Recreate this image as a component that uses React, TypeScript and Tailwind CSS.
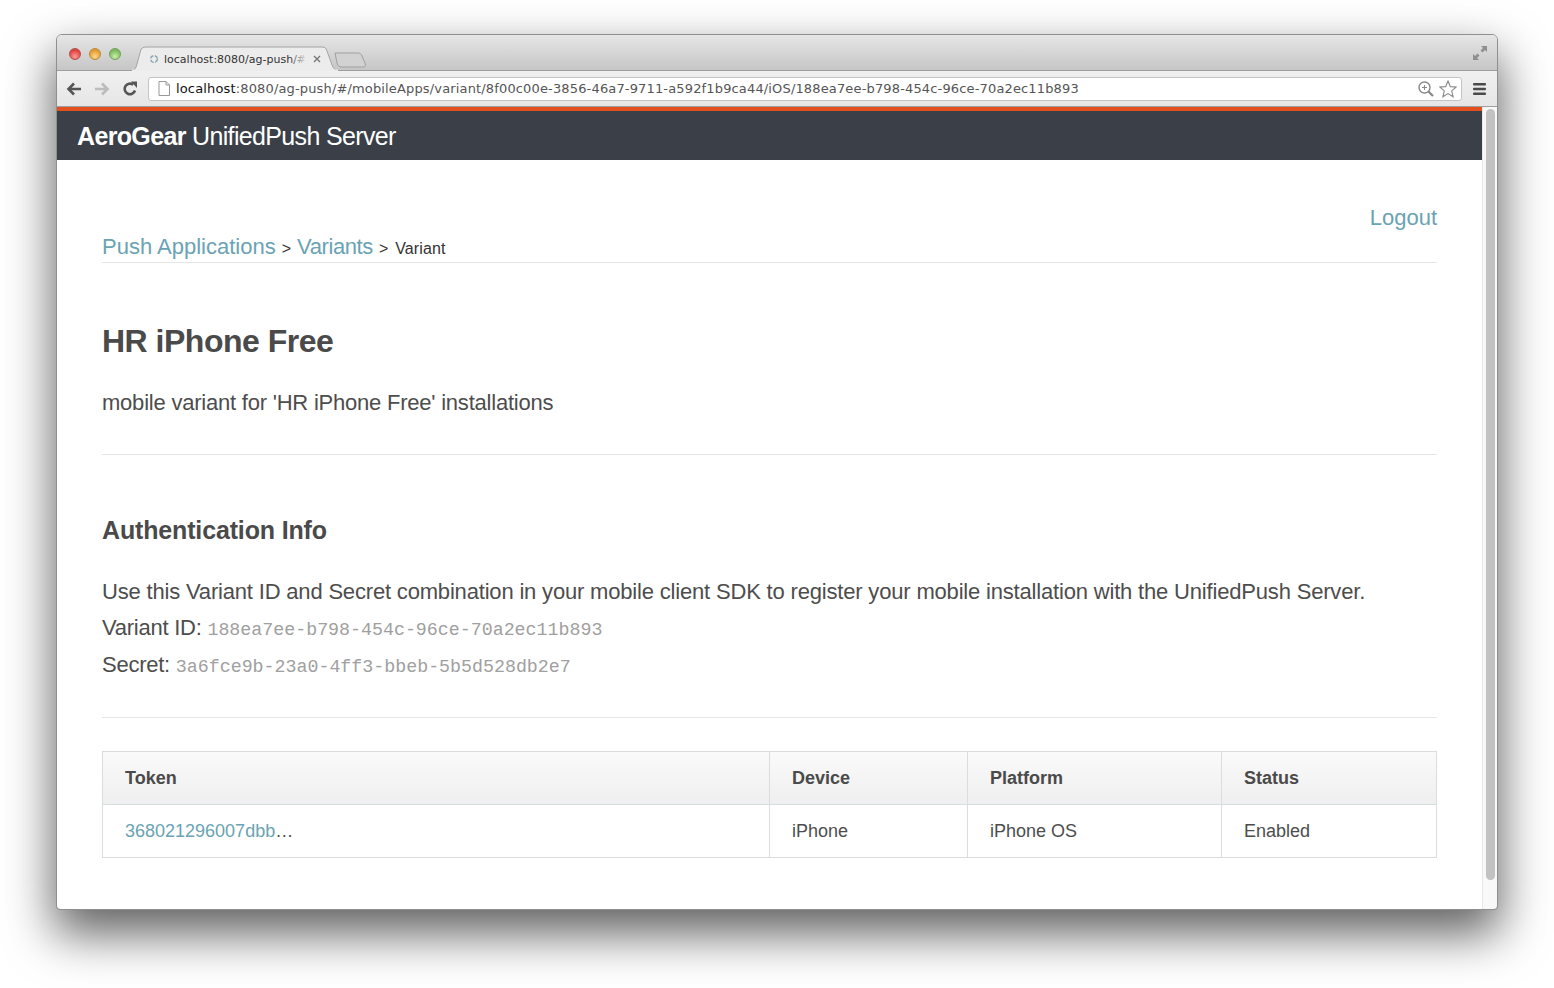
export default function App() {
  const sans = "font-['Liberation_Sans',Arial,sans-serif]";
  const mono = "font-['Liberation_Mono','Courier_New',monospace]";
  const tab = "font-['DejaVu_Sans','Noto_Sans',sans-serif]";
  const code = `text-[18.300px] leading-none tracking-normal text-[#a0a0a0] ${mono}`;
  const th = "h-[53px] px-[22px] flex items-center font-bold text-[#4a4a4a] bg-gradient-to-b from-[#fafafa] to-[#efefef] border-b border-[#d5dfe2]";
  return (
    <div className={`w-[1554px] h-[988px] bg-white overflow-hidden pt-[35px] pl-[57px] ${sans}`}>
      <div className="w-[1440px] h-[874px] rounded-t-[5px] rounded-b-[3px] flex flex-col overflow-hidden bg-white shadow-[0_22px_48px_3px_rgba(0,0,0,0.62)] outline outline-1 outline-[#8f8f8f]">
        {/* title bar */}
        <div className="h-[36px] shrink-0 relative bg-gradient-to-b from-[#e6e6e6] to-[#c6c6c6] border-b border-[#9e9e9e] flex items-start">
          <div className="flex gap-[8px] pl-[12px] pt-[13px]">
            <span className="w-[12px] h-[12px] rounded-full border border-[#b0504f] bg-[radial-gradient(circle_at_50%_75%,#ff9a95,#e0413d_70%)]" />
            <span className="w-[12px] h-[12px] rounded-full border border-[#b98a3c] bg-[radial-gradient(circle_at_50%_75%,#ffd88a,#e29a2d_70%)]" />
            <span className="w-[12px] h-[12px] rounded-full border border-[#74a060] bg-[radial-gradient(circle_at_50%_75%,#c9f0a8,#7cb85c_70%)]" />
          </div>
          <svg className="absolute left-[75px] top-[11px]" width="240" height="25" viewBox="0 0 240 25">
            <path d="M0 25 C3 24 4 22 5 18 L8.500 5 C9.500 2 11 1 14 1 L190 1 C193 1 194 2 195 5 L200 19 C201 22 203 24 206 25 Z" fill="#ececec" stroke="#a4a4a4" />
            <path d="M0 24.500 H206" stroke="#ececec" strokeWidth="2" />
            <path d="M203 7 L206 7 L226 7 C228 7 229 8 230 10 L233 17 C234 20 233 21 231 21 L210 21 C207 21 206 20 205 17 Z" fill="#d2d2d2" stroke="#a0a0a0" />
          </svg>
          <svg className="absolute left-[92px] top-[19px]" width="10" height="10" viewBox="0 0 10 10">
            <circle cx="5" cy="5" r="3.400" fill="none" stroke="#8ba5b5" strokeWidth="1.500" strokeDasharray="4 1.500" />
          </svg>
          <span className={`absolute left-[107px] top-[17px] whitespace-nowrap text-[11px] leading-[16px] text-[#333] ${tab}`}>localhost:8080/ag-push/#</span>
          <span className="absolute left-[232px] top-[16px] w-[18px] h-[17px] bg-gradient-to-r from-transparent to-[#ececec]" />
          <svg className="absolute left-[256px] top-[20px]" width="8" height="8" viewBox="0 0 8 8">
            <path d="M1 1 L7 7 M7 1 L1 7" stroke="#777" strokeWidth="1.400" />
          </svg>
          <svg className="absolute left-[1415px] top-[10px]" width="16" height="16" viewBox="0 0 16 16" fill="#8f8f8f">
            <path d="M15 1 L15 7 L13 5 L10.500 7.500 L8.500 5.500 L11 3 L9 1 Z" />
            <path d="M1 15 L1 9 L3 11 L5.500 8.500 L7.500 10.500 L5 13 L7 15 Z" />
          </svg>
        </div>
        {/* toolbar */}
        <div className="h-[36px] shrink-0 bg-gradient-to-b from-[#f0f0f0] to-[#e6e6e6] border-b border-[#a0a0a0] flex items-center pl-[9px] pr-[10px]">
          <svg width="16" height="14" viewBox="0 0 16 14" fill="none" stroke="#555" strokeWidth="2.600" className="shrink-0">
            <path d="M15 7 H3 M8 1.500 L2.500 7 L8 12.500" />
          </svg>
          <svg width="16" height="14" viewBox="0 0 16 14" fill="none" stroke="#bcbcbc" strokeWidth="2.600" className="ml-[12px] shrink-0">
            <path d="M1 7 H13 M8 1.500 L13.500 7 L8 12.500" />
          </svg>
          <svg width="16" height="16" viewBox="0 0 16 16" fill="none" className="ml-[12px] shrink-0">
            <path d="M13 9.500 A5.300 5.300 0 1 1 11.200 3.700" stroke="#555" strokeWidth="2.600" />
            <path d="M9 0.500 L15 0.500 L15 7 Z" fill="#555" />
          </svg>
          <div className="ml-[10px] w-[1314px] h-[24px] bg-white border border-[#c4c4c4] rounded-[3px] flex items-center pl-[9px] pr-[4px]">
            <svg width="12" height="15" viewBox="0 0 12 15" className="shrink-0">
              <path d="M1 .5 H8 L11.500 4 V14.500 H1 Z M8 .5 V4 H11.500" fill="#fff" stroke="#999" />
            </svg>
            <span className={`ml-[6px] text-[13px] tracking-[0.15px] whitespace-nowrap text-[#555] flex-1 ${tab}`}>
              <span className="text-[#111]">localhost</span>:8080/ag-push/#/mobileApps/variant/8f00c00e-3856-46a7-9711-a592f1b9ca44/iOS/188ea7ee-b798-454c-96ce-70a2ec11b893
            </span>
            <svg width="16" height="16" viewBox="0 0 16 16" fill="none" stroke="#888" className="shrink-0">
              <circle cx="6.500" cy="6.500" r="5.500" strokeWidth="1.400" />
              <path d="M6.500 4 V9 M4 6.500 H9" strokeWidth="1" />
              <path d="M10.500 10.500 L15 15" strokeWidth="2.200" />
            </svg>
            <svg width="18" height="18" viewBox="0 0 18 18" fill="#fff" stroke="#888" strokeWidth="1.100" className="ml-[5px] shrink-0">
              <path d="M9 1 L11.300 6.600 L17.200 7 L12.700 10.900 L14.100 16.800 L9 13.600 L3.900 16.800 L5.300 10.900 L.8 7 L6.700 6.600 Z" />
            </svg>
          </div>
          <svg width="13" height="12" viewBox="0 0 13 12" fill="#4a4a4a" className="ml-[11px] shrink-0">
            <rect y="0" width="13" height="2.600" rx="1" />
            <rect y="4.700" width="13" height="2.600" rx="1" />
            <rect y="9.400" width="13" height="2.600" rx="1" />
          </svg>
        </div>
        {/* page + scrollbar */}
        <div className="flex-1 flex min-h-0">
          <div className="w-[1425px] shrink-0 flex flex-col">
            <header className="h-[53px] shrink-0 bg-[#3b3f47] border-t-[4px] border-[#e2501f] pl-[20px] pt-[2px] flex items-center text-white text-[25px] tracking-[-0.65px]">
              <span><strong className="font-bold">AeroGear</strong> UnifiedPush Server</span>
            </header>
            <main className="px-[45px] text-[#4d4d4d]">
              <div className="flex justify-between items-end border-b border-[#e5e5e5] h-[103px]">
                <div className="flex items-baseline leading-[28px] -mb-[1px]">
                  <a className="text-[22px] text-[#6aa3b3]">Push Applications</a>
                  <span className="text-[16px] text-[#333] mx-[6px]">&gt;</span>
                  <a className="text-[22px] tracking-[-0.4px] text-[#6aa3b3]">Variants</a>
                  <span className="text-[16px] text-[#333] ml-[6px] mr-[7px]">&gt;</span>
                  <span className="text-[16px] tracking-[0.1px] text-[#333]">Variant</span>
                </div>
                <a className="text-[22px] leading-[28px] text-[#6aa3b3] mb-[30px]">Logout</a>
              </div>
              <h1 className="mt-[60px] text-[32px] leading-[36px] font-bold tracking-[-0.5px] text-[#4a4a4a]">HR iPhone Free</h1>
              <p className="mt-[28px] text-[22px] leading-[32px] tracking-[-0.22px]">mobile variant for 'HR iPhone Free' installations</p>
              <div className="mt-[35px] border-t border-[#e5e5e5]" />
              <h2 className="mt-[60px] text-[25px] leading-[30px] font-bold tracking-[-0.15px] text-[#4a4a4a]">Authentication Info</h2>
              <p className="mt-[29px] text-[22px] leading-[35px] tracking-[-0.18px] whitespace-nowrap">Use this Variant ID and Secret combination in your mobile client SDK to register your mobile installation with the UnifiedPush Server.</p>
              <p className="text-[22px] leading-[37px] tracking-[-0.25px] whitespace-nowrap">Variant ID: <code className={code}>188ea7ee-b798-454c-96ce-70a2ec11b893</code></p>
              <p className="text-[22px] leading-[37px] tracking-[-0.25px] whitespace-nowrap">Secret: <code className={code}>3a6fce9b-23a0-4ff3-bbeb-5b5d528db2e7</code></p>
              <div className="mt-[34px] border-t border-[#e5e5e5]" />
              <div className="mt-[33px] border border-[#dcdcdc] grid grid-cols-[666px_198px_254px_1fr] text-[18px]">
                <div className={th}>Token</div>
                <div className={`${th} border-l border-l-[#dcdcdc]`}>Device</div>
                <div className={`${th} border-l border-l-[#dcdcdc]`}>Platform</div>
                <div className={`${th} border-l border-l-[#dcdcdc]`}>Status</div>
                <div className="h-[52px] px-[22px] flex items-center"><a className="text-[#6aa3b3]">368021296007dbb</a>…</div>
                <div className="h-[52px] px-[22px] flex items-center border-l border-[#dcdcdc]">iPhone</div>
                <div className="h-[52px] px-[22px] flex items-center border-l border-[#dcdcdc]">iPhone OS</div>
                <div className="h-[52px] px-[22px] flex items-center border-l border-[#dcdcdc]">Enabled</div>
              </div>
            </main>
          </div>
          <div className="w-[15px] shrink-0 bg-[#f8f8f8] border-l border-[#e8e8e8] pt-[2px] pl-[3px]">
            <div className="w-[9px] h-[771px] rounded-full bg-[#c2c2c2]" />
          </div>
        </div>
      </div>
    </div>
  );
}
